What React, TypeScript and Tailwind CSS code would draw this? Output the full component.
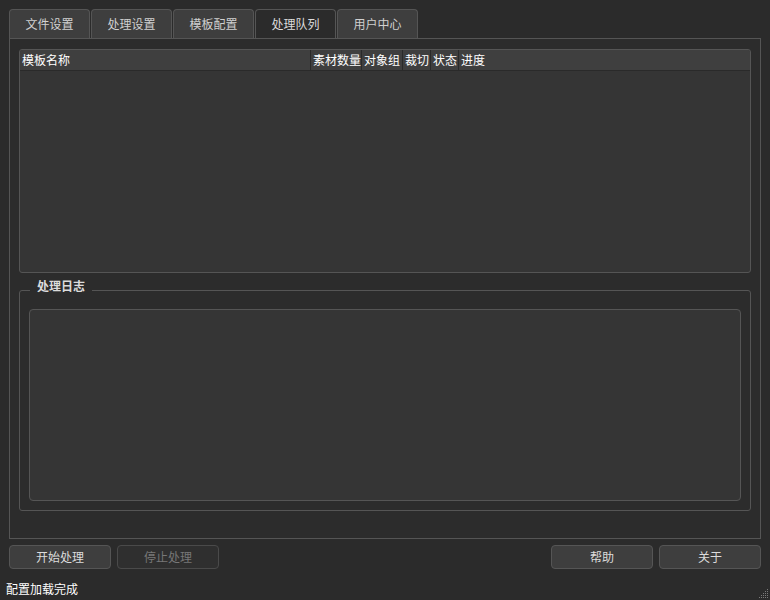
const tabs = ['文件设置', '处理设置', '模板配置', '处理队列', '用户中心'];
const active = 3;

const columns = [
  { label: '模板名称', width: 'w-[291px]' },
  { label: '素材数量', width: 'w-[51px]' },
  { label: '对象组', width: 'w-[41px]' },
  { label: '裁切', width: 'w-[28px]' },
  { label: '状态', width: 'w-[28px]' },
  { label: '进度', width: 'flex-1' },
];

function Button({ label, disabled = false }: { label: string; disabled?: boolean }) {
  return (
    <button
      disabled={disabled}
      className={
        disabled
          ? 'h-[24px] w-[102px] rounded-[4px] border border-[#4a4a4a] bg-[#2f2f2f] text-[12px] text-[#777777]'
          : 'h-[24px] w-[102px] rounded-[4px] border border-[#555555] bg-[#3e3e3e] text-[12px] text-[#dcdcdc]'
      }
    >
      {label}
    </button>
  );
}

function SizeGrip() {
  const dots = [
    [8, 0],
    [6, 2], [8, 2],
    [4, 4], [6, 4], [8, 4],
    [2, 6], [4, 6], [6, 6], [8, 6],
    [0, 8], [2, 8], [4, 8], [6, 8], [8, 8],
  ];
  return (
    <svg width="10" height="10" className="absolute bottom-[1px] right-[1px]">
      {dots.map(([x, y]) => (
        <rect key={`${x}-${y}`} x={x} y={y} width="1" height="1" fill="#7a7a7a" />
      ))}
    </svg>
  );
}

export default function App() {
  return (
    <div
      className="relative flex h-[600px] w-[770px] flex-col bg-[#2b2b2b] text-[12px] text-[#dcdcdc]"
      style={{ fontFamily: '"Noto Sans CJK SC", "Noto Sans", sans-serif' }}
    >
      <div className="flex gap-[1px] pl-[9px] pt-[9px]">
        {tabs.map((t, i) => (
          <div
            key={t}
            className={
              i === active
                ? 'flex h-[29px] w-[81px] items-center justify-center rounded-t-[4px] border border-b-0 border-[#555555] bg-[#2b2b2b] text-[#dcdcdc]'
                : 'flex h-[29px] w-[81px] items-center justify-center rounded-t-[4px] border border-b-0 border-[#555555] bg-[#3e3e3e] text-[#d0d0d0]'
            }
          >
            {t}
          </div>
        ))}
      </div>

      <div className="ml-[9px] flex h-[501px] w-[752px] flex-col border border-[#555555] bg-[#2c2c2c] px-[9px] pt-[10px]">
        <div className="flex h-[224px] flex-col overflow-hidden rounded-[3px] border border-[#555555] bg-[#353535]">
          <div className="flex h-[21px] border-b border-[#2a2a2a] bg-[#3f3f3f] text-white">
            {columns.map((c, i) => (
              <div
                key={c.label}
                className={`${c.width} flex items-center pl-[2px] leading-none ${i < columns.length - 1 ? 'border-r border-[#2a2a2a]' : ''}`}
              >
                {c.label}
              </div>
            ))}
          </div>
        </div>

        <div className="relative mt-[17px] h-[221px] rounded-[3px] border border-[#555555] px-[9px] pb-[9px] pt-[18px]">
          <span className="absolute left-[10px] top-[-13px] bg-[#2c2c2c] px-[7px] text-[12px] font-bold leading-[16px] text-[#dcdcdc]">
            处理日志
          </span>
          <div className="h-full rounded-[4px] border border-[#555555] bg-[#353535]" />
        </div>
      </div>

      <div className="flex items-center justify-between px-[9px] pt-[6px]">
        <div className="flex gap-[6px]">
          <Button label="开始处理" />
          <Button label="停止处理" disabled />
        </div>
        <div className="flex gap-[6px]">
          <Button label="帮助" />
          <Button label="关于" />
        </div>
      </div>

      <div className="flex flex-1 items-end pb-[2px] pl-[6px] text-white">配置加载完成</div>
      <SizeGrip />
    </div>
  );
}
